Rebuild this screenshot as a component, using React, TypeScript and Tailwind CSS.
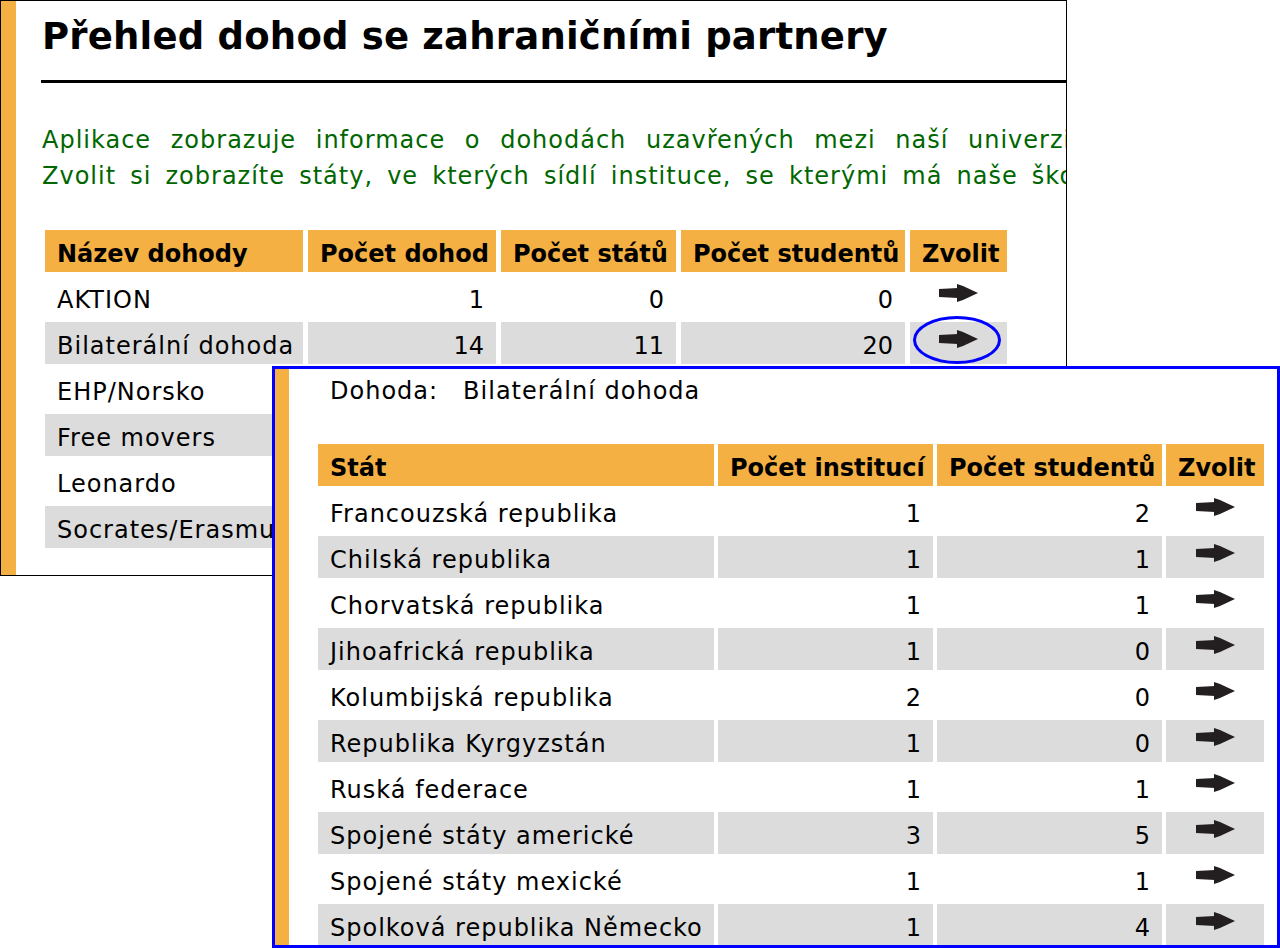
import React from 'react';

const ORANGE = 'bg-[#f5b043]';

const Arrow: React.FC = () => (
    <svg width="39" height="18" viewBox="0 0 39 18" className="block">
        <polygon points="0,5 19,4 19,14 0,13" fill="#231f20" />
        <polygon points="18,0 24,2 39,9 24,16 18,18" fill="#231f20" />
    </svg>
);

const agreements = [
    { name: 'AKTION', count: '1', states: '0', students: '0' },
    { name: 'Bilaterální dohoda', count: '14', states: '11', students: '20' },
    { name: 'EHP/Norsko', count: '2', states: '2', students: '3' },
    { name: 'Free movers', count: '1', states: '5', students: '7' },
    { name: 'Leonardo', count: '3', states: '3', students: '4' },
    { name: 'Socrates/Erasmus', count: '52', states: '18', students: '96' },
];

const states = [
    { name: 'Francouzská republika', inst: '1', students: '2' },
    { name: 'Chilská republika', inst: '1', students: '1' },
    { name: 'Chorvatská republika', inst: '1', students: '1' },
    { name: 'Jihoafrická republika', inst: '1', students: '0' },
    { name: 'Kolumbijská republika', inst: '2', students: '0' },
    { name: 'Republika Kyrgyzstán', inst: '1', students: '0' },
    { name: 'Ruská federace', inst: '1', students: '1' },
    { name: 'Spojené státy americké', inst: '3', students: '5' },
    { name: 'Spojené státy mexické', inst: '1', students: '1' },
    { name: 'Spolková republika Německo', inst: '1', students: '4' },
];

const cell = 'h-[42px] pt-[6px] leading-[36px] px-[12px] whitespace-nowrap overflow-hidden';

const App: React.FC = () => {
    return (
        <div className="relative w-[1280px] h-[948px] bg-white overflow-hidden font-['DejaVu_Sans',Verdana,sans-serif] text-black">
            {/* Background page */}
            <div className="flex w-[1067px] h-[576px] border border-black overflow-hidden">
                <div className={`w-[15px] shrink-0 ${ORANGE}`}></div>
                <div className="flex-1 min-w-0 overflow-hidden">
                    <h1 className="pl-[26px] pt-[14px] text-[37px] leading-[44px] font-bold tracking-[0.2px] whitespace-nowrap">
                        Přehled dohod se zahraničními partnery
                    </h1>
                    <div className="ml-[25px] mt-[21px] h-[3px] bg-black"></div>

                    <div className="pl-[26px] mt-[39px] text-[24px] leading-[36px] tracking-[1px] text-[#006600] whitespace-nowrap">
                        <div className="[word-spacing:11px]">
                            Aplikace zobrazuje informace o dohodách uzavřených mezi naší univerzitou a zahraničními partnery.
                        </div>
                        <div className="[word-spacing:5.5px]">
                            Zvolit si zobrazíte státy, ve kterých sídlí instituce, se kterými má naše škola uzavřenou dohodu.
                        </div>
                    </div>

                    <div className="ml-[29px] mt-[36px] grid grid-cols-[258px_188px_175px_224px_97px] gap-x-[5px] gap-y-[4px] text-[24px]">
                        <div className={`${cell} ${ORANGE} font-bold`}>Název dohody</div>
                        <div className={`${cell} ${ORANGE} font-bold`}>Počet dohod</div>
                        <div className={`${cell} ${ORANGE} font-bold`}>Počet států</div>
                        <div className={`${cell} ${ORANGE} font-bold`}>Počet studentů</div>
                        <div className={`${cell} ${ORANGE} font-bold`}>Zvolit</div>
                        {agreements.map((a, i) => {
                            const bg = i % 2 === 1 ? 'bg-[#dcdcdc]' : 'bg-white';
                            return (
                                <React.Fragment key={a.name}>
                                    <div className={`${cell} ${bg} tracking-[1px]`}>{a.name}</div>
                                    <div className={`${cell} ${bg} text-right`}>{a.count}</div>
                                    <div className={`${cell} ${bg} text-right`}>{a.states}</div>
                                    <div className={`${cell} ${bg} text-right`}>{a.students}</div>
                                    <div className={`h-[42px] pt-[8px] flex justify-center ${bg}`}>
                                        <Arrow />
                                    </div>
                                </React.Fragment>
                            );
                        })}
                    </div>
                </div>
            </div>

            {/* Highlight around the selected arrow */}
            <div className="absolute left-[913px] top-[316px] w-[88px] h-[48px] rounded-[50%] border-[3px] border-[#0000ff]"></div>

            {/* Detail window */}
            <div className="absolute left-[272px] top-[366px] w-[1008px] h-[582px] border-[3px] border-[#0000ff] bg-white flex overflow-hidden">
                <div className={`w-[14px] shrink-0 ${ORANGE}`}></div>
                <div className="flex-1 min-w-0">
                    <div className="pl-[41px] pt-[8px] text-[24px] leading-[28px] tracking-[1px] whitespace-nowrap">
                        <span>Dohoda:</span>
                        <span className="ml-[25px]">Bilaterální dohoda</span>
                    </div>

                    <div className="ml-[29px] mt-[39px] grid grid-cols-[396px_215px_225px_98px] gap-x-[4px] gap-y-[4px] text-[24px]">
                        <div className={`${cell} ${ORANGE} font-bold`}>Stát</div>
                        <div className={`${cell} ${ORANGE} font-bold`}>Počet institucí</div>
                        <div className={`${cell} ${ORANGE} font-bold`}>Počet studentů</div>
                        <div className={`${cell} ${ORANGE} font-bold`}>Zvolit</div>
                        {states.map((s, i) => {
                            const bg = i % 2 === 1 ? 'bg-[#dcdcdc]' : 'bg-white';
                            return (
                                <React.Fragment key={s.name}>
                                    <div className={`${cell} ${bg} tracking-[1px]`}>{s.name}</div>
                                    <div className={`${cell} ${bg} text-right`}>{s.inst}</div>
                                    <div className={`${cell} ${bg} text-right`}>{s.students}</div>
                                    <div className={`h-[42px] pt-[8px] flex justify-center ${bg}`}>
                                        <Arrow />
                                    </div>
                                </React.Fragment>
                            );
                        })}
                    </div>
                </div>
            </div>
        </div>
    );
};

export default App;
